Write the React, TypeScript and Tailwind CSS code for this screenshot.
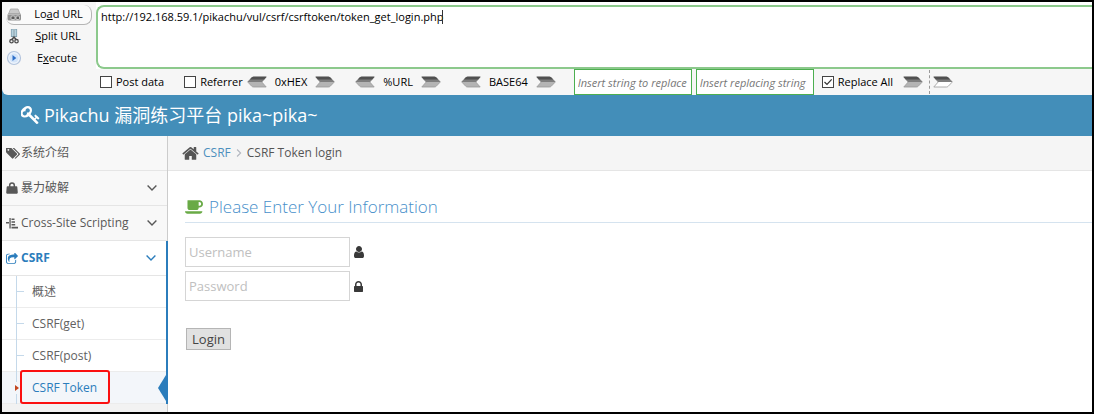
import { useState } from 'react';
import type { ReactNode } from 'react';
import clsx from 'clsx';

interface GlyphProps {
  className?: string;
}

const icons = {
  key: 'M832 512q0-80-56-136t-136-56-136 56-56 136q0 42 19 83-41-19-83-19-80 0-136 56t-56 136 56 136 136 56 136-56 56-136q0-42-19-83 41 19 83 19 80 0 136-56t56-136zm851 704q0 17-49 66t-66 49q-9 0-28.5-16t-36.5-33-38.5-40-24.5-26l-96 96 220 220q28 28 28 68 0 42-39 81t-81 39q-40 0-68-28l-671-671q-176 131-365 131-163 0-265.5-102.5t-102.5-265.5q0-160 95-313t248-248 313-95q163 0 265.5 102.5t102.5 265.5q0 189-131 365l355 355 96-96q-3-3-26-24.5t-40-38.5-33-36.5-16-28.5q0-17 49-66t66-49q13 0 23 10 6 6 46 44.5t82 79.5 86.5 86 73 78 28.5 41z',
  home: 'M1472 992v480q0 26-19 45t-45 19h-384v-384h-256v384h-384q-26 0-45-19t-19-45v-480q0-1 .5-3t.5-3l575-474 575 474q1 2 1 6zm223-69l-62 74q-8 9-21 11h-3q-13 0-21-7l-692-577-692 577q-12 8-24 7-13-2-21-11l-62-74q-8-10-7-23.5t11-21.5l719-599q32-26 76-26t76 26l244 204v-195q0-14 9-23t23-9h192q14 0 23 9t9 23v408l219 182q10 8 11 21.5t-7 23.5z',
  tags: 'M448 448q0-53-37.5-90.5t-90.5-37.5-90.5 37.5-37.5 90.5 37.5 90.5 90.5 37.5 90.5-37.5 37.5-90.5zm1067 576q0 53-37 90l-491 492q-39 37-91 37-53 0-90-37l-715-716q-38-37-64.5-101t-26.5-117v-416q0-52 38-90t90-38h416q53 0 117 26.5t102 64.5l715 714q37 39 37 91zm384 0q0 53-37 90l-491 492q-39 37-91 37-36 0-59-14t-53-45l470-470q37-37 37-90 0-52-37-91l-715-714q-38-38-102-64.5t-117-26.5h224q53 0 117 26.5t102 64.5l715 714q37 39 37 91z',
  lock: 'M640 768h512v-192q0-106-75-181t-181-75-181 75-75 181v192zm832 96v576q0 40-28 68t-68 28h-960q-40 0-68-28t-28-68v-576q0-40 28-68t68-28h32v-192q0-184 132-316t316-132 316 132 132 316v192h32q40 0 68 28t28 68z',
  user: 'M1536 1399q0 109-62.5 187t-150.5 78h-854q-88 0-150.5-78t-62.5-187q0-85 8.5-160.5t31.5-152 58.5-131 94-89 134.5-34.5q131 128 313 128t313-128q76 0 134.5 34.5t94 89 58.5 131 31.5 152 8.5 160.5zm-256-887q0 159-112.5 271.5t-271.5 112.5-271.5-112.5-112.5-271.5 112.5-271.5 271.5-112.5 271.5 112.5 112.5 271.5z',
  coffee: 'M1664 640q0-80-56-136t-136-56h-64v384h64q80 0 136-56t56-136zm-1664 768h1792q0 106-75 181t-181 75h-1280q-106 0-181-75t-75-181zm1856-768q0 159-112.5 271.5t-271.5 112.5h-64v32q0 92-66 158t-158 66h-704q-92 0-158-66t-66-158v-736q0-26 19-45t45-19h1152q159 0 271.5 112.5t112.5 271.5z',
  share: 'M1472 989v259q0 119-84.5 203.5t-203.5 84.5h-832q-119 0-203.5-84.5t-84.5-203.5v-832q0-119 84.5-203.5t203.5-84.5h255q13 0 22.5 9.5t9.5 22.5q0 27-26 32-77 26-133 60-10 4-16 4h-112q-66 0-113 47t-47 113v832q0 66 47 113t113 47h832q66 0 113-47t47-113v-214q0-19 18-28 28-13 54-37 16-16 35-8 21 9 21 29zm237-496l-384 384q-18 19-45 19-12 0-25-5-39-17-39-59v-192h-160q-323 0-438 131-119 137-74 473 3 23-20 34-8 2-12 2-16 0-26-13-10-14-21-31t-39.5-68.5-49.5-99.5-38.5-114-17.5-122q0-49 3.5-91t14-90 28-88 47-81.5 68.5-74 94.5-61.5 124.5-48.5 159.5-30.5 196.5-11h160v-192q0-42 39-59 13-5 25-5 26 0 45 19l384 384q19 19 19 45t-19 45z',
};

// each glyph is cropped to its own ink
const boxes = {
  key: '90 120 1600 1600',
  home: '60 250 1672 1300',
  tags: '0 240 1900 1410',
  lock: '320 128 1152 1408',
  user: '256 128 1280 1536',
  coffee: '0 256 1856 1408',
  share: '64 64 1664 1472',
};

const Glyph = ({ name, className }: GlyphProps & { name: keyof typeof icons }) => (
  <svg viewBox={boxes[name]} fill="currentColor" className={clsx('shrink-0', className)} aria-hidden="true">
    <path d={icons[name]} />
  </svg>
);

const BagIcon = () => (
  <svg viewBox="0 0 12 12" className="h-3 w-3 shrink-0" aria-hidden="true">
    <path d="M3.7 5V3.2a2.3 2.3 0 0 1 4.6 0V5" fill="none" stroke="currentColor" strokeWidth="1.5" />
    <path d="M1.5 4.2h9q.7 0 .8.8l.5 5.6q0 1.1-.9 1.1H1.1q-1 0-.9-1.1L.7 5q.1-.8.8-.8z" fill="currentColor" />
  </svg>
);

const IndentIcon = () => (
  <svg viewBox="0 0 12 12" className="h-3 w-3 shrink-0" fill="currentColor" aria-hidden="true">
    <path d="M0 5h3v1.6H0zM3.4 1h1.3v10.500H3.400zM5.500 1.400h3V3h-3zM5.500 4.200H9v1.600H5.500zM5.500 7h3.700v1.600H5.500zM5.500 9.800H12v1.600H5.500z" />
  </svg>
);

const Chevron = ({ className }: GlyphProps) => (
  <svg viewBox="0 0 10 6" className={clsx('h-1.5', className)} fill="none" stroke="currentColor" strokeWidth="1.4" aria-hidden="true">
    <path d="M.6.6 5 5 9.4.6" />
  </svg>
);

const DiskIcon = () => (
  <svg viewBox="0 0 16 14" className="h-3.5 w-4 shrink-0" aria-hidden="true">
    <path d="M4.500 1h7.500l2 5H2.500z" fill="#c9c9c9" stroke="#a5a5a5" strokeWidth=".8" />
    <rect x="1.500" y="5.500" width="13.500" height="7" rx="1.500" fill="#909090" />
    <path d="M2 6.300h12.500" stroke="#c4c4c4" />
    <rect x="5" y="8" width="4" height="3.500" rx="1" fill="#5d5d5d" stroke="#e0e0e0" strokeWidth=".8" />
    <rect x="10" y="8" width="3.500" height="3.500" rx="1" fill="#5d5d5d" stroke="#e0e0e0" strokeWidth=".8" />
  </svg>
);

const ScissorsIcon = () => (
  <svg viewBox="0 0 16 16" className="h-4 w-4 shrink-0" fill="none" aria-hidden="true">
    <path d="M6.300 1v8M9.700 1v8" stroke="#7f9fae" strokeWidth="2.800" />
    <path d="M6.300 1.500v6.500M9.700 1.500v6.500" stroke="#bcd8e4" strokeWidth="1.200" />
    <path d="M6 11.500 8 9l2 2.500" stroke="#4c4c4c" strokeWidth="1.500" />
    <circle cx="5.500" cy="13.200" r="1.700" stroke="#4c4c4c" strokeWidth="1.300" />
    <circle cx="10.500" cy="13.200" r="1.700" stroke="#4c4c4c" strokeWidth="1.300" />
  </svg>
);

const PlayIcon = () => (
  <svg viewBox="0 0 16 16" className="h-4 w-4 shrink-0" aria-hidden="true">
    <circle cx="8" cy="8" r="6.500" fill="#eef4fc" stroke="#b3c4dd" strokeWidth="1.200" />
    <circle cx="8" cy="8" r="4.600" fill="#d3e4f9" />
    <path d="M6.500 5v6l3.800-3z" fill="#2e6fc8" />
  </svg>
);

const Arrow = ({ left, hollow, label }: { left?: boolean; hollow?: boolean; label: string }) => (
  <button type="button" aria-label={label} className="shrink-0">
    <svg viewBox="0 0 20 12" className={clsx('h-3 w-5', left && '-scale-x-100')} aria-hidden="true">
      <path
        d="M.8 1h12.700q1 0 1.700.7L19.300 6l-4.100 4.300q-.7.700-1.700.7H.8l4.400-5z"
        fill={hollow ? '#ffffff' : '#b4b4b4'}
        stroke="#9a9a9a"
        strokeWidth=".8"
      />
      <path d="M.5.700h13q1 0 1.700.7L19.500 6H5.200z" fill="#7d7d7d" />
      <path d="M.5.700h13q1 0 1.700.7l2 2.100H2.900z" fill="#505050" />
    </svg>
  </button>
);

const Check = ({ label, initial = false }: { label: string; initial?: boolean }) => {
  const [checked, setChecked] = useState(initial);
  return (
    <label className="flex shrink-0 items-center gap-1">
      <span className="grid h-3 w-3 place-items-center">
        <input
          type="checkbox"
          checked={checked}
          onChange={(e) => setChecked(e.target.checked)}
          className="col-start-1 row-start-1 h-3 w-3 appearance-none border border-[#444] bg-white"
        />
        {checked && (
          <svg viewBox="0 0 10 10" className="pointer-events-none col-start-1 row-start-1 h-2.5 w-2.5" aria-hidden="true">
            <path d="M1.5 5 4 7.5 8.7 2.3" fill="none" stroke="#333" strokeWidth="1.2" />
          </svg>
        )}
      </span>
      {label}
    </label>
  );
};

const Encoder = ({ name }: { name: string }) => (
  <div className="flex shrink-0 items-center gap-2">
    <Arrow left label={`Decode ${name}`} />
    {name}
    <Arrow label={`Encode ${name}`} />
  </div>
);

const ReplaceField = ({ placeholder }: { placeholder: string }) => (
  <input
    aria-label={placeholder}
    placeholder={placeholder}
    className="h-[26px] w-[118px] border border-[#4caf50] bg-white px-[3px] italic outline-none placeholder:text-[#777]"
  />
);

const Toolbar = () => (
  <div className="flex h-[93px] overflow-hidden rounded-bl-md bg-[#f6f6f6] text-[11px] text-black">
    <div className="flex w-[94px] shrink-0 flex-col pt-[3px] pl-1">
      <button type="button" className="flex h-5 w-[86px] items-center rounded-lg border-r border-b border-[#b5b5b5] bg-[#fafafa]">
        <DiskIcon />
        <span className="flex-1 pl-1">Lo<u>a</u>d URL</span>
      </button>
      <button type="button" className="flex h-[22px] w-[86px] items-center">
        <ScissorsIcon />
        <span className="flex-1 pl-0.5"><u>S</u>plit URL</span>
      </button>
      <button type="button" className="flex h-[22px] w-[86px] items-center">
        <PlayIcon />
        <span className="flex-1">E<u>x</u>ecute</span>
      </button>
    </div>
    <div className="min-w-0 flex-1">
      <div className="relative bg-white pt-[3px]">
        <textarea
          aria-label="URL"
          spellCheck={false}
          defaultValue="http://192.168.59.1/pikachu/vul/csrf/csrftoken/token_get_login.php"
          className="block h-16 w-full resize-none rounded-l-lg border-2 border-r-0 border-[#8cc98c] bg-white px-[3px] py-0.5 leading-4 outline-none"
        />
        {/* text caret */}
        <span className="absolute top-2 left-[346px] h-3.5 w-px bg-[#333]" />
      </div>
      <div className="flex h-[26px] items-center pl-1">
        <div className="flex shrink-0 items-center gap-5">
          <Check label="Post data" />
          <Check label="Referrer" />
        </div>
        <div className="flex shrink-0 items-center gap-5 pl-1">
          <Encoder name="0xHEX" />
          <Encoder name="%URL" />
          <Encoder name="BASE64" />
        </div>
        <div className="flex shrink-0 gap-1 pl-[18px]">
          <ReplaceField placeholder="Insert string to replace" />
          <ReplaceField placeholder="Insert replacing string" />
        </div>
        <div className="flex shrink-0 items-center gap-2.5 pl-2">
          <Check label="Replace All" initial />
          <Arrow label="Replace" />
        </div>
        <div className="ml-1.5 flex h-6 shrink-0 items-center border-l border-dashed border-[#999] pl-[3px]">
          <Arrow hollow label="Undo replace" />
        </div>
      </div>
    </div>
  </div>
);

const MenuLink = ({ icon, label, active, expandable = true }: { icon: ReactNode; label: string; active?: boolean; expandable?: boolean }) => (
  <a
    href="#"
    className={clsx(
      'flex h-[35px] items-center border-b border-[#e5e5e5] pr-2.5 pl-1',
      active ? 'bg-white font-bold text-[#2b7dbc]' : 'bg-[#f8f8f8] text-[#585858]'
    )}
  >
    <span className="flex w-[15px] shrink-0">{icon}</span>
    <span className="flex-1 whitespace-nowrap">{label}</span>
    {expandable && <Chevron className="w-2.5" />}
  </a>
);

const subItems = ['概述', 'CSRF(get)', 'CSRF(post)', 'CSRF Token'];

const Sidebar = () => (
  <nav className="flex w-[166px] shrink-0 flex-col bg-[#f2f2f2] text-xs">
    <div className="border-r border-[#ccc]">
      <MenuLink icon={<Glyph name="tags" className="h-[11px] w-3.5" />} label="系统介绍" expandable={false} />
      <MenuLink icon={<BagIcon />} label="暴力破解" />
      <MenuLink icon={<IndentIcon />} label="Cross-Site Scripting" />
    </div>
    <div className="border-r-2 border-[#2b7dbc]">
      <MenuLink icon={<Glyph name="share" className="h-[11px] w-3" />} label="CSRF" active />
      <ul className="relative bg-white">
        {/* tree line */}
        <li aria-hidden="true" className="absolute top-0 bottom-0 left-3.5 z-10 w-px bg-[#c5d9ea]" />
        {subItems.map((item) => {
          const current = item === 'CSRF Token';
          return (
            <li key={item} className={clsx('relative flex h-8 items-center border-b border-[#ececec]', current && 'bg-[#f3f6fa]')}>
              {current ? (
                <>
                  <svg viewBox="0 0 6 12" className="absolute left-3 z-20 h-3 w-1.5 bg-[#f3f6fa]" aria-hidden="true">
                    <path d="M1 3v6l4-3z" fill="#c2461f" />
                  </svg>
                  <svg viewBox="0 0 8 26" className="absolute right-0 h-[26px] w-2" aria-hidden="true">
                    <path d="M8 0v26L0 13z" fill="#2b7dbc" />
                  </svg>
                  <span className="absolute -top-0.5 left-[18px] z-20 h-[34px] w-[90px] rounded-[3px] border-2 border-[#fb1010]" />
                </>
              ) : (
                <span className="absolute left-3.5 h-px w-2 bg-[#c5d9ea]" />
              )}
              <a href="#" className={clsx('pl-[30px]', current ? 'text-[#2b7dbc]' : 'text-[#616161]')}>
                {item}
              </a>
            </li>
          );
        })}
      </ul>
    </div>
    <div className="flex-1 border-r border-[#ccc]" />
  </nav>
);

const Field = ({ type, label, icon }: { type: string; label: string; icon: ReactNode }) => (
  <label className="flex items-center gap-1">
    <input
      type={type}
      aria-label={label}
      placeholder={label}
      className="h-[30px] w-[165px] border border-[#d5d5d5] bg-white px-[3px] outline-none placeholder:text-[#c0c0c0]"
    />
    {icon}
  </label>
);

const LoginForm = () => (
  <form className="pt-6 pl-[17px]" onSubmit={(e) => e.preventDefault()}>
    <h4 className="flex h-7 items-center gap-1.5 border-b border-[#d5e3ef] pb-1 text-[17px] font-light text-[#478fca]">
      <Glyph name="coffee" className="h-3.5 w-[18px] text-[#69aa46]" />
      Please Enter Your Information
    </h4>
    <div className="flex flex-col gap-1 pt-3.5 text-[13px] text-[#393939]">
      <Field type="text" label="Username" icon={<Glyph name="user" className="h-3 w-2.5" />} />
      <Field type="password" label="Password" icon={<Glyph name="lock" className="h-[11px] w-[9px]" />} />
    </div>
    <button type="submit" className="mt-[27px] ml-px h-[22px] w-[45px] border border-[#b5b5b5] bg-[#e1e1e1] text-[13px] leading-5 text-[#444]">
      Login
    </button>
  </form>
);

const App = () => (
  <div className="flex min-h-screen flex-col border-2 border-black bg-white font-['Open_Sans','Noto_Sans_CJK_SC',sans-serif]">
    <div className="bg-[#438eb9]">
      <Toolbar />
      <header className="flex h-[41px] items-center gap-1 pb-0.5 pl-[19px] text-lg text-white">
        <Glyph name="key" className="h-[18px] w-[19px]" />
        Pikachu 漏洞练习平台 pika~pika~
      </header>
    </div>
    <div className="flex flex-1">
      <Sidebar />
      <main className="min-w-0 flex-1">
        <div className="flex h-[35px] items-center border-b border-[#e5e5e5] bg-[#f5f5f5] pl-3.5 text-xs text-[#555]">
          <Glyph name="home" className="h-[13px] w-[17px]" />
          <a href="#" className="pl-1 text-[#4c8fbd]">CSRF</a>
          <Chevron className="mx-1 w-2 -rotate-90 text-[#b2b6bf]" />
          <span>CSRF Token login</span>
        </div>
        <LoginForm />
      </main>
    </div>
  </div>
);

export default App;
